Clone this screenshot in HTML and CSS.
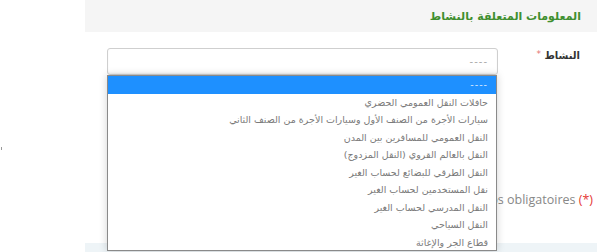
FILE: index.html
```html
<!DOCTYPE html>
<html lang="ar">
<head>
    <meta charset="UTF-8">
    <title>المعلومات المتعلقة بالنشاط</title>
    <link rel="stylesheet" href="styles.css">
</head>
<body>
    <div class="page">
        <div class="gutter"><span class="tick"></span></div>

        <div class="main">
            <div class="section-head">
                <h2>المعلومات المتعلقة بالنشاط</h2>
            </div>

            <div class="form-row">
                <div class="select-wrap">
                    <div class="select-box">----</div>
                    <ul class="options">
                        <li class="active">----</li>
                        <li>حافلات النقل العمومي الحضري</li>
                        <li>سيارات الأجرة من الصنف الأول وسيارات الأجرة من الصنف الثاني</li>
                        <li>النقل العمومي للمسافرين بين المدن</li>
                        <li>النقل بالعالم القروي (النقل المزدوج)</li>
                        <li>النقل الطرقي للبضائع لحساب الغير</li>
                        <li>نقل المستخدمين لحساب الغير</li>
                        <li>النقل المدرسي لحساب الغير</li>
                        <li>النقل السياحي</li>
                        <li>قطاع الجر والإغاثة</li>
                    </ul>
                </div>
                <label class="field-label">النشاط <span class="star">*</span></label>
            </div>

            <p class="note">Champs obligatoires <span class="req">(*)</span></p>

            <div class="footer-band"></div>
        </div>
    </div>
</body>
</html>
```

FILE: styles.css
```css
body {
    margin: 0;
    background: white;
    font-family: "DejaVu Sans", sans-serif;
    color: #333;
}

.page {
    display: flex;
    width: 597px;
    height: 252px;
    overflow: hidden;
}

.gutter {
    width: 85px;
    flex-shrink: 0;
    padding-top: 147px;
    box-sizing: border-box;
}

.tick {
    display: block;
    width: 1px;
    height: 3px;
    margin-left: 1px;
    background: #999;
}

.main {
    flex: 1;
    display: flex;
    flex-direction: column;
}

.section-head {
    height: 32px;
    background: #f5f5f5;
    display: flex;
    align-items: center;
    justify-content: flex-end;
    padding-right: 16px;
}

.section-head h2 {
    margin: 0;
    font-size: 11px;
    font-weight: bold;
    color: #3f8f2f;
    direction: rtl;
}

.form-row {
    display: flex;
    justify-content: space-between;
    align-items: flex-start;
    margin-top: 16px;
    padding: 0 17px 0 22px;
}

.select-wrap {
    position: relative;
    width: 391px;
}

.select-box {
    height: 27px;
    box-sizing: border-box;
    border: 1px solid #cfcfcf;
    border-radius: 3px;
    box-shadow: inset 0 -1px 2px rgba(0, 0, 0, 0.06);
    color: #aaa;
    font-size: 10px;
    letter-spacing: 1px;
    text-align: right;
    padding: 7px 9px 0 0;
}

/* the open dropdown list, drawn over the page */
.options {
    position: absolute;
    top: 27px;
    left: 0;
    width: 390px;
    height: 176px;
    box-sizing: border-box;
    margin: 0;
    padding: 0;
    list-style: none;
    background: white;
    border: 1px solid #8a8a8a;
    box-shadow: 0 0 8px rgba(0, 0, 0, 0.18);
    direction: rtl;
    z-index: 2;
}

.options li {
    height: 17.5px;
    line-height: 17.5px;
    padding-right: 8px;
    font-size: 9.5px;
    color: #7a7a7a;
    white-space: nowrap;
}

.options li.active {
    background: #1e90ff;
    color: #e8f2ff;
    letter-spacing: 1px;
}

.field-label {
    margin-top: 1px;
    font-size: 10px;
    font-weight: bold;
    color: #333;
    direction: rtl;
}

.star {
    color: #e57373;
    font-weight: normal;
    font-size: 9px;
    vertical-align: 2px;
}

.req {
    color: #e53935;
}

.note {
    margin: 116px 0 0 0;
    padding-right: 4px;
    text-align: right;
    font-family: "Open Sans", sans-serif;
    font-size: 12.5px;
    color: #888;
}

.footer-band {
    margin-top: auto;
    height: 9px;
    background: #eef4f7;
}
```
